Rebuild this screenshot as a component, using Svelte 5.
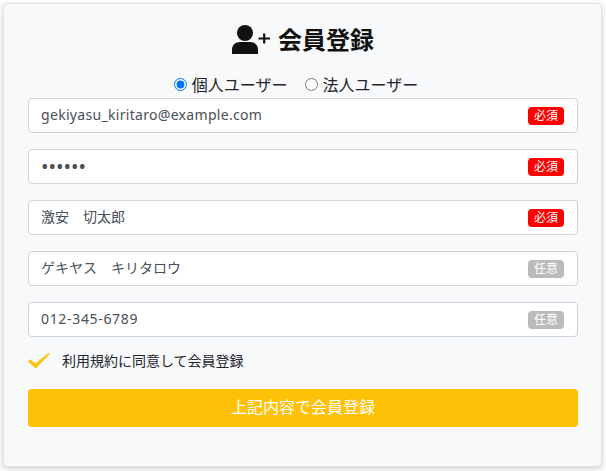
<script lang="ts">
	const fields = [
		{ type: 'email', value: 'gekiyasu_kiritaro@example.com', required: true },
		{ type: 'password', value: 'secret', required: true },
		{ type: 'text', value: '激安　切太郎', required: true },
		{ type: 'text', value: 'ゲキヤス　キリタロウ', required: false },
		{ type: 'tel', value: '012-345-6789', required: false }
	];

	let kind = $state('personal');
</script>

<div class="page">
	<form class="card">
		<h1 class="title">
			<svg class="user-icon" viewBox="0 0 38 30" width="38" height="30" aria-hidden="true">
				<circle cx="13" cy="8" r="8" fill="#111" />
				<path d="M0 29v-4.500C0 20 3.500 17 8 17h10c4.500 0 8 3 8 7.500V29z" fill="#111" />
				<path d="M26.500 13.500h11.500M32.200 8.500v10" stroke="#111" stroke-width="2.200" fill="none" />
			</svg>
			<span>会員登録</span>
		</h1>

		<div class="kinds">
			<label class="kind"><input type="radio" bind:group={kind} value="personal" />個人ユーザー</label>
			<label class="kind"><input type="radio" bind:group={kind} value="corporate" />法人ユーザー</label>
		</div>

		<div class="fields">
			{#each fields as field}
				<div class="field">
					<input class="control" type={field.type} value={field.value} />
					<span class="badge" class:required={field.required}>{field.required ? '必須' : '任意'}</span>
				</div>
			{/each}
		</div>

		<div class="agree">
			<svg viewBox="0 0 22 16" width="22" height="16" aria-hidden="true">
				<path d="M0 8.500L2.200 6.300 7.500 10.600 20.500 0 21.800 1 7.800 15.500z" fill="#ffc107" />
			</svg>
			<span>利用規約に同意して会員登録</span>
		</div>

		<button class="submit" type="button">上記内容で会員登録</button>
	</form>
</div>

<style>
	:global(body) {
		background: #fff;
	}

	.page {
		padding: 3px 4px 4px 3px;
		font-family: 'Noto Sans', 'Noto Sans CJK JP', sans-serif;
		color: #212529;
	}

	.card {
		box-sizing: border-box;
		height: 464px;
		padding: 18px 23px 0 24px;
		background: #f8f9fa;
		border: 1px solid #dee2e6;
		border-radius: 4px;
		box-shadow: 0 2px 6px rgba(0, 0, 0, 0.18);
	}

	.title {
		display: flex;
		justify-content: center;
		align-items: center;
		gap: 8px;
		height: 36px;
		margin: 0;
		font-size: 24px;
		font-weight: 700;
		color: #111;
	}

	.title span {
		padding-bottom: 4px;
	}

	.kinds {
		display: flex;
		justify-content: center;
		gap: 17px;
		height: 24px;
		margin: 14px 14px 2px 0;
		align-items: center;
		font-size: 16px;
	}

	.kind {
		display: flex;
		align-items: center;
		gap: 5px;
	}

	.kind input {
		width: 13px;
		height: 13px;
		margin: 0;
	}

	.fields {
		display: flex;
		flex-direction: column;
		gap: 16px;
	}

	.field {
		position: relative;
	}

	.control {
		display: block;
		box-sizing: border-box;
		width: 100%;
		height: 35px;
		padding: 0 0 2px 12px;
		background: #fff;
		border: 1px solid #ced4da;
		border-radius: 4px;
		font: inherit;
		font-size: 14px;
		color: #495057;
	}

	.control[type='text'] {
		padding-bottom: 4px;
	}

	.control[type='email'] {
		letter-spacing: 0.31px;
	}

	.control[type='tel'] {
		letter-spacing: 0.67px;
	}

	.control[type='password'] {
		font-size: 20px;
		padding-top: 2px;
		letter-spacing: 0;
	}

	.badge {
		position: absolute;
		top: 9px;
		right: 14px;
		width: 36px;
		height: 18px;
		border-radius: 4px;
		background: #bbb;
		color: #fff;
		font-size: 12px;
		line-height: 17px;
		text-align: center;
	}

	.badge.required {
		background: #f00;
	}

	.agree {
		display: flex;
		align-items: center;
		gap: 12px;
		height: 20px;
		margin-top: 14px;
		font-size: 14px;
	}

	.agree span {
		padding-bottom: 2px;
	}

	.submit {
		display: block;
		width: 100%;
		height: 38px;
		margin-top: 18px;
		padding-bottom: 6px;
		background: #ffc107;
		border: 0;
		border-radius: 4px;
		color: #fff;
		font: inherit;
		font-size: 16px;
	}
</style>
